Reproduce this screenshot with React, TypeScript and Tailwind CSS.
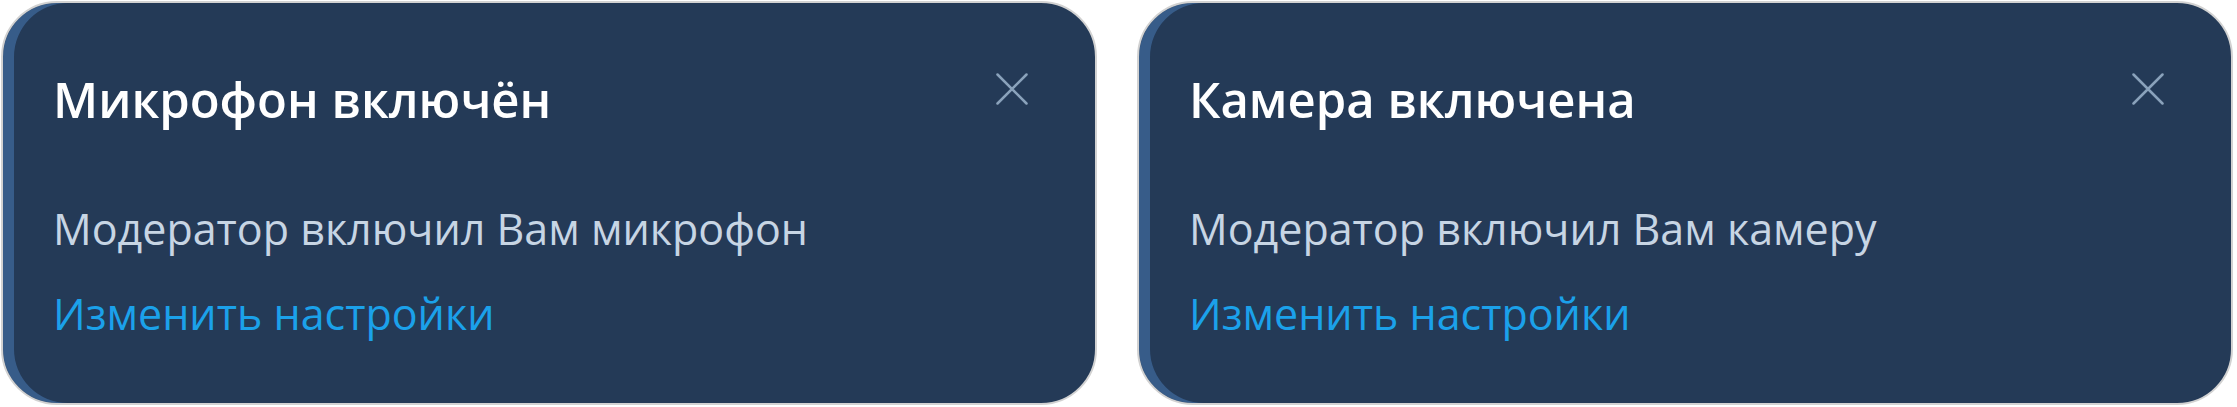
import React from "react";

type Notice = {
  title: string;
  message: string;
};

const notices: Notice[] = [
  { title: "Микрофон включён", message: "Модератор включил Вам микрофон" },
  { title: "Камера включена", message: "Модератор включил Вам камеру" },
];

const CloseIcon = () => (
  <svg width="32" height="32" viewBox="0 0 32 32" fill="none">
    <path d="M1.5 1.5L30.5 30.5M30.5 1.5L1.5 30.5" stroke="#8aa2bb" strokeWidth="2.5" strokeLinecap="round" />
  </svg>
);

const NoticeCard = ({ title, message }: Notice) => (
  <div className="w-[1096px] h-[404px] shrink-0 rounded-[56px] border-2 border-[#d2d2d2] bg-[#243a57] shadow-[inset_11px_0_0_#375c89] pl-[50px] pr-[67px] pt-[72px]">
    <div className="flex items-start justify-between">
      <h2 className="text-[49px] leading-[49px] font-semibold text-white">{title}</h2>
      <button className="-mt-[2px] p-0">
        <CloseIcon />
      </button>
    </div>
    <p className="mt-[83px] text-[43px] leading-[43px] text-[#c7d5e4]">{message}</p>
    <a className="block mt-[42px] text-[43px] leading-[43px] text-[#1ba1ea] cursor-pointer">
      Изменить настройки
    </a>
  </div>
);

export default function App() {
  return (
    <div
      className="w-[2237px] h-[407px] bg-white flex gap-[40px] pl-[1px] pt-[1px]"
      style={{ fontFamily: '"Open Sans", "Noto Sans", sans-serif' }}
    >
      {notices.map((n) => (
        <NoticeCard key={n.title} {...n} />
      ))}
    </div>
  );
}
